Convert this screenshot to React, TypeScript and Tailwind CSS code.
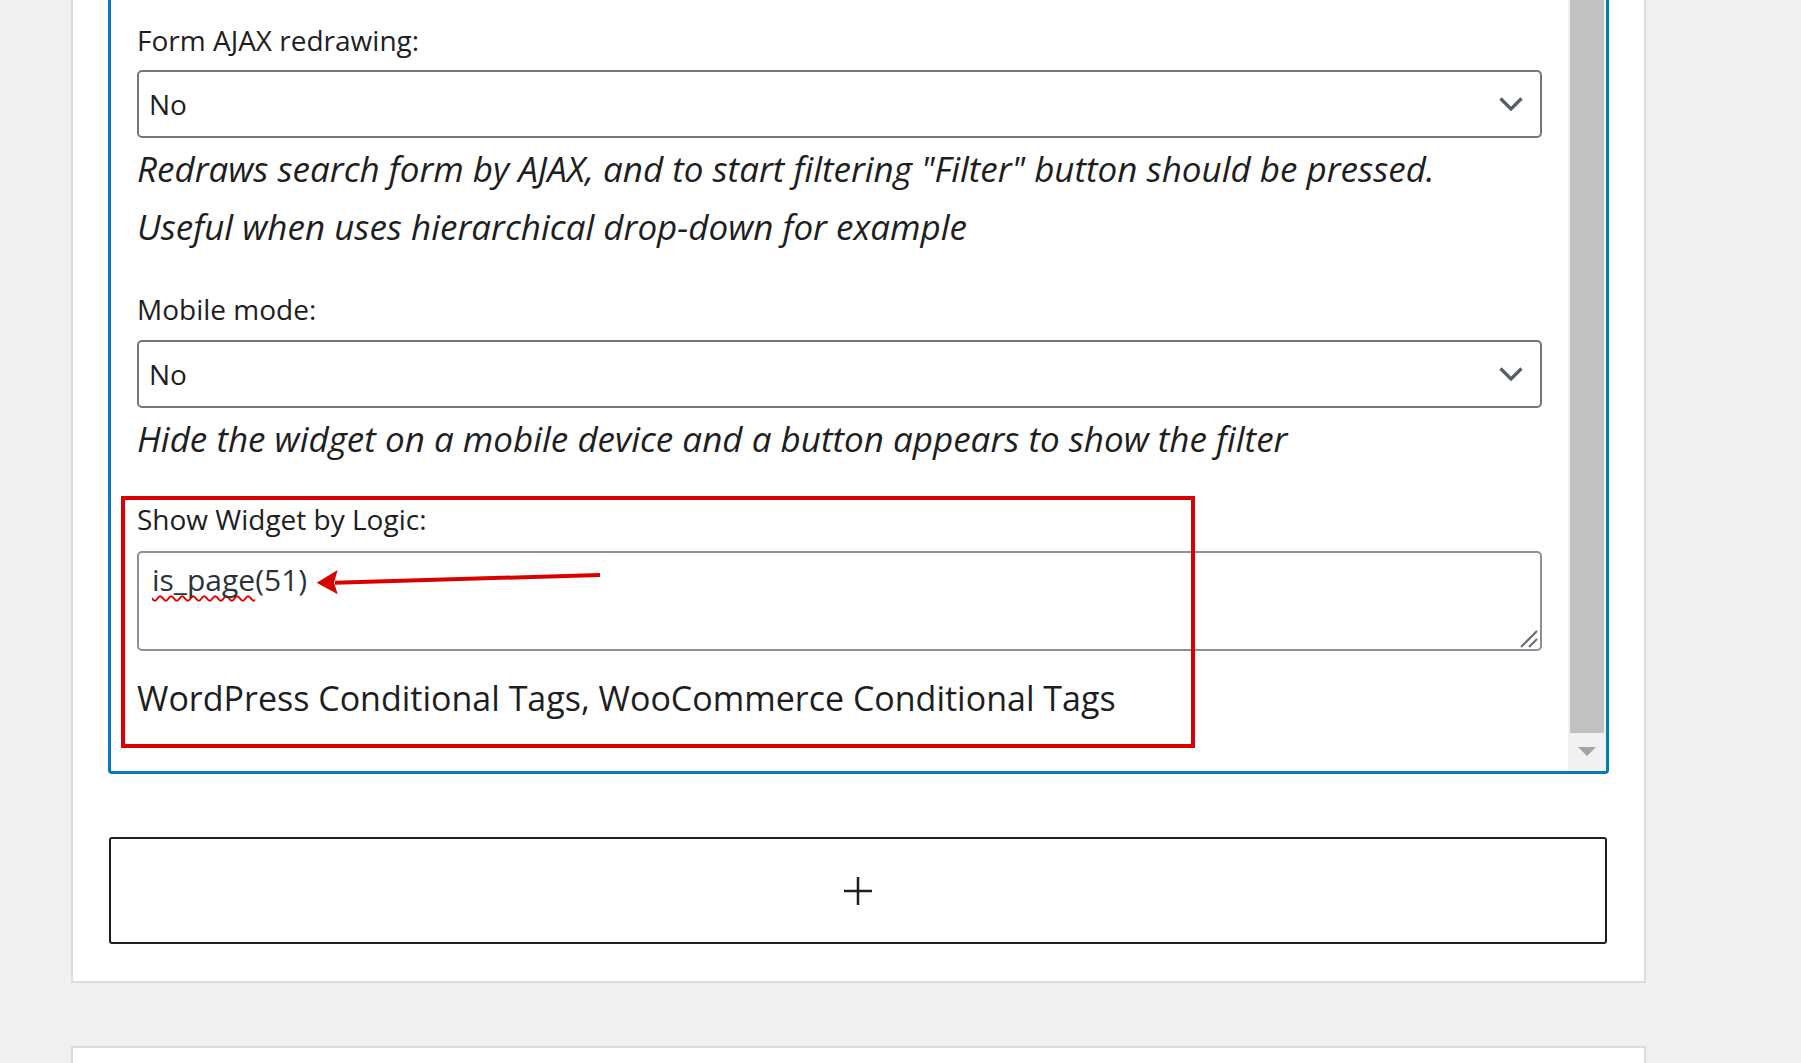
import React from "react";

function Chevron() {
  return (
    <svg width="26" height="16" viewBox="0 0 26 16" className="shrink-0">
      <path d="M2.5 2.5 L13 13 L23.5 2.5" fill="none" stroke="#555d66" strokeWidth="3.2" strokeLinecap="butt" strokeLinejoin="miter" />
    </svg>
  );
}

function SelectBox({ value, className }: { value: string; className?: string }) {
  return (
    <div
      className={
        "flex h-[68px] items-center justify-between rounded-[5px] border-2 border-[#767676] bg-white pl-[10px] pr-[16px] " +
        (className ?? "")
      }
    >
      <span className="text-[28px] leading-[38px] text-[#1e1e1e]">{value}</span>
      <Chevron />
    </div>
  );
}

export default function App() {
  return (
    <div className="h-[1063px] w-[1801px] overflow-hidden bg-[#f0f0f1] font-['Open_Sans',sans-serif] text-[#1e1e1e]">
      <div className="ml-[71px] w-[1575px] border-x-2 border-b-2 border-[#dcdcde] bg-white px-[35px] pb-[37px]">
        <div className="flex w-[1501px] rounded-b-[4px] border-x-[3px] border-b-[3px] border-[#007cba]">
          <div className="relative h-[771px] flex-1 overflow-hidden px-[26px] pt-[21px]">
            <label className="block text-[28px] leading-[38px]">Form AJAX redrawing:</label>
            <SelectBox value="No" className="mt-[11px]" />
            <p className="mt-[2px] whitespace-nowrap text-[35px] italic leading-[58px]">
              Redraws search form by AJAX, and to start filtering "Filter" button should be pressed.
              <br />
              Useful when uses hierarchical drop-down for example
            </p>

            <label className="mt-[34px] block text-[28px] leading-[38px]">Mobile mode:</label>
            <SelectBox value="No" className="mt-[12px]" />
            <p className="mt-[2px] whitespace-nowrap text-[35px] italic leading-[58px]">
              Hide the widget on a mobile device and a button appears to show the filter
            </p>

            <label className="mt-[32px] block text-[28px] leading-[38px]">Show Widget by Logic:</label>
            <div className="relative mt-[13px] h-[100px] rounded-[5px] border-2 border-[#8c8f94] bg-white pl-[13px] pt-[8px]">
              <span className="text-[30px] leading-[38px] text-[#2c3338]">
                <span className="underline decoration-[#e00000] decoration-wavy decoration-[2px] underline-offset-[4px] [text-decoration-skip-ink:none]">is_page</span>
                (51)
              </span>
              <svg className="absolute bottom-[1px] right-[2px]" width="18" height="18" viewBox="0 0 18 18">
                <line x1="1" y1="17" x2="17" y2="1" stroke="#646970" strokeWidth="2" />
                <line x1="9" y1="17" x2="17" y2="9" stroke="#646970" strokeWidth="2" />
              </svg>
            </div>
            <p className="mt-[24px] whitespace-nowrap text-[34px] leading-[46px]">
              WordPress Conditional Tags, WooCommerce Conditional Tags
            </p>

            {/* annotation overlay: red box */}
            <div className="pointer-events-none absolute left-[10px] top-[496px] h-[252px] w-[1074px] border-4 border-[#d80000]" />
            {/* annotation overlay: arrow */}
            <svg className="pointer-events-none absolute left-[200px] top-[560px]" width="295" height="40" viewBox="0 0 295 40">
              <line x1="24" y1="22.7" x2="289" y2="15" stroke="#d80000" strokeWidth="4" />
              <polygon points="5.7,22.7 26.7,10 23,22.5 26.7,34.3" fill="#d80000" />
            </svg>
          </div>
          <div className="flex h-[771px] w-[38px] flex-col bg-[#f1f1f1]">
            <div className="mx-[2px] h-[733px] bg-[#c1c1c1]" />
            <div className="flex flex-1 items-center justify-center">
              <svg width="18" height="10" viewBox="0 0 18 10">
                <polygon points="0,0 18,0 9,9" fill="#a3a3a3" />
              </svg>
            </div>
          </div>
        </div>
        <div className="ml-[1px] mt-[63px] flex h-[107px] w-[1498px] items-center justify-center rounded-[3px] border-2 border-[#1e1e1e] bg-white">
          <svg width="28" height="28" viewBox="0 0 28 28">
            <line x1="14" y1="0" x2="14" y2="28" stroke="#1e1e1e" strokeWidth="2.5" />
            <line x1="0" y1="14" x2="28" y2="14" stroke="#1e1e1e" strokeWidth="2.5" />
          </svg>
        </div>
      </div>
      <div className="ml-[71px] mt-[63px] h-[100px] w-[1575px] border-x-2 border-t-2 border-[#dcdcde] bg-white" />
    </div>
  );
}
